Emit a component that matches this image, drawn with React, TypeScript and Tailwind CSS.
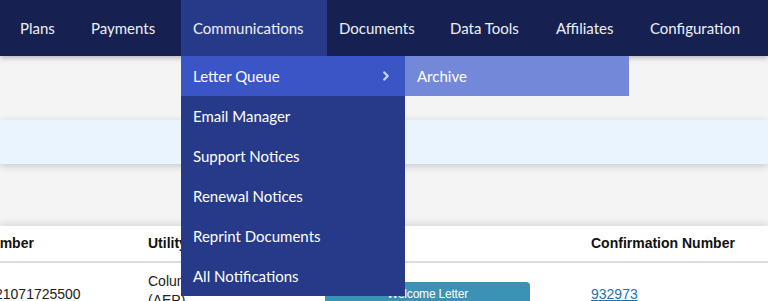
import { ChevronRight } from "lucide-react";

const navItems = [
  { label: "Plans", w: "w-[71px]" },
  { label: "Payments", w: "w-[102px]" },
  { label: "Communications", w: "w-[146px]", active: true },
  { label: "Documents", w: "w-[111px]" },
  { label: "Data Tools", w: "w-[106px]" },
  { label: "Affiliates", w: "w-[94px]" },
  { label: "Configuration", w: "w-[130px]" },
];

const commsMenu = [
  "Letter Queue",
  "Email Manager",
  "Support Notices",
  "Renewal Notices",
  "Reprint Documents",
  "All Notifications",
];

const navFont = { fontFamily: "Lato, 'Noto Sans', sans-serif" };

function CommsDropdown() {
  return (
    <div className="absolute left-0 top-[56px] z-20 flex">
      <ul className="w-[224px] bg-[#273a89]">
        {commsMenu.map((item, i) => (
          <li
            key={item}
            className={
              "flex h-10 items-center justify-between pl-3 pr-3 text-[15px] text-white " +
              (i === 0 ? "bg-[#3a55c6]" : "")
            }
          >
            <span>{item}</span>
            {i === 0 && <ChevronRight className="h-3.5 w-3.5 text-[#c9d1f1]" strokeWidth={4} />}
          </li>
        ))}
      </ul>
      <div className="flex h-10 w-[224px] items-center bg-[#7388d8] pl-3 text-[15px] text-white">
        Archive
      </div>
    </div>
  );
}

export default function App() {
  return (
    <div className="h-[301px] w-[768px] overflow-hidden bg-[#f4f4f4]">
      <nav
        className="relative z-10 flex h-14 bg-[#172151] pl-2 shadow-[0_2px_5px_rgba(0,0,0,0.25)]"
        style={navFont}
      >
        {navItems.map((item) => (
          <div
            key={item.label}
            className={
              "relative flex h-full shrink-0 items-center pl-3 text-[15px] text-[#eef0f8] " +
              item.w +
              (item.active ? " bg-[#273a89]" : "")
            }
          >
            {item.label}
            {item.active && <CommsDropdown />}
          </div>
        ))}
      </nav>

      <div className="mt-16 h-11 bg-[#eaf4ff] shadow-[0_2px_8px_rgba(0,0,0,0.18)]" />

      <div
        className="mt-[62px] h-[80px] bg-white shadow-[0_-2px_8px_rgba(0,0,0,0.12)]"
        style={{ fontFamily: "'Liberation Sans', Arial, sans-serif" }}
      >
        <div className="flex h-[37px] items-center border-b-2 border-[#dddddd] text-[14px] font-bold text-[#111]">
          <div className="w-[148px] overflow-hidden">
            <span className="-ml-[19px] block">Number</span>
          </div>
          <div className="w-[443px]">Utility</div>
          <div>Confirmation Number</div>
        </div>
        <div className="flex pt-[9px] text-[14px] text-[#222]">
          <div className="w-[148px] overflow-hidden pt-[12px]">
            <span className="-ml-[5px] block">21071725500</span>
          </div>
          <div className="w-[177px] leading-[19px]">
            Columbus
            <br />
            (AEP)
          </div>
          <div className="w-[205px] pt-[10px]">
            <div className="h-[24px] rounded-t-[4px] bg-[#3a92b5] pt-[5px] text-center text-[12px] leading-[14px] tracking-[-0.2px] text-white">
              Welcome Letter
            </div>
          </div>
          <div className="ml-[61px] pt-[12px]">
            <a className="text-[#1f73b0] underline">932973</a>
          </div>
        </div>
      </div>
    </div>
  );
}
